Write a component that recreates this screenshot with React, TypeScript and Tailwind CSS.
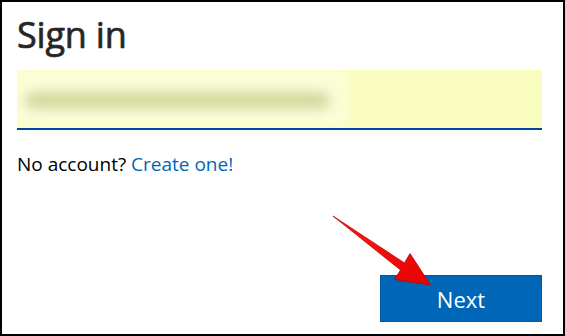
import React from "react";

const font = { fontFamily: '"Open Sans", "Noto Sans", Arial, sans-serif' };

function RedArrow() {
  return (
    <svg
      className="absolute left-0 top-0 pointer-events-none"
      width="565"
      height="336"
      viewBox="0 0 565 336"
    >
      <defs>
        <linearGradient id="arrowFill" x1="0" y1="0" x2="1" y2="1">
          <stop offset="0" stopColor="#ff1a1a" />
          <stop offset="1" stopColor="#e60000" />
        </linearGradient>
      </defs>
      <polygon
        points="331,214 402.5,261 408,251.5 428.5,283 392.5,277.5 398.5,268"
        fill="url(#arrowFill)"
        stroke="#c40000"
        strokeWidth="0.8"
        strokeLinejoin="round"
      />
    </svg>
  );
}

export default function App() {
  return (
    <div
      className="relative w-[565px] h-[336px] border-2 border-black bg-white flex flex-col pl-[15px] pr-[21px] pb-[12px] overflow-hidden"
      style={font}
    >
      <h1 className="mt-[15px] text-[36px] leading-9 font-normal text-[#262626] tracking-[-0.2px] [-webkit-text-stroke:0.7px_#262626]">
        Sign in
      </h1>

      {/* email field, autofilled and blurred */}
      <div className="mt-[17px] h-[60px] bg-[#f9fdc0] border-b-2 border-[#0046a4] relative flex items-center overflow-hidden">
        <div className="absolute left-0 top-0 w-[330px] h-[56px] bg-[#fbfdd8] blur-[5px]" />
        <div className="relative ml-[8px] mt-[2px] w-[305px] h-[17px] rounded-full bg-[#d4d79e] blur-[6px]" />
      </div>

      <p className="mt-[22px] text-[19px] leading-6 text-black">
        No account? <span className="text-[#0067b8]">Create one!</span>
      </p>

      <button className="mt-auto self-end w-[162px] h-[47px] bg-[#0067b8] border border-[#0058a0] text-white text-[22px] leading-none">
        Next
      </button>

      <RedArrow />
    </div>
  );
}
